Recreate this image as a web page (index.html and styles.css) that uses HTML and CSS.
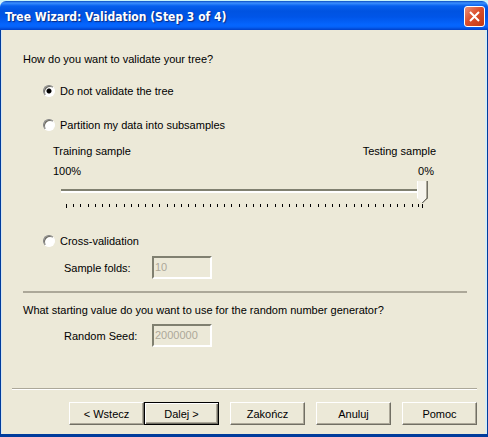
FILE: index.html
```html
<!DOCTYPE html>
<html lang="en">
<head>
    <meta charset="UTF-8">
    <meta name="viewport" content="width=device-width, initial-scale=1.0">
    <title>Tree Wizard: Validation</title>
    <link rel="stylesheet" href="styles.css">
</head>
<body>
    <form class="dialog">
        <header class="titlebar">
            <h1>Tree Wizard: Validation (Step 3 of 4)</h1>
            <button type="button" class="close" aria-label="Close">
                <svg width="13" height="13" viewBox="0 0 13 13">
                    <path d="M2 2l9 9M11 2l-9 9" stroke="#fff" stroke-width="2" fill="none"/>
                </svg>
            </button>
        </header>

        <main class="content">
            <p>How do you want to validate your tree?</p>

            <div class="option">
                <input type="radio" name="validation" id="none" checked>
                <label for="none">Do not validate the tree</label>
            </div>

            <div class="option">
                <input type="radio" name="validation" id="partition">
                <label for="partition">Partition my data into subsamples</label>
            </div>

            <div class="samples">
                <div class="sample-row">
                    <label for="split">Training sample</label>
                    <span>Testing sample</span>
                </div>
                <div class="sample-row percents">
                    <output>100%</output>
                    <output>0%</output>
                </div>
                <div class="slider">
                    <input type="range" id="split" min="0" max="100" value="100">
                    <svg class="ticks" viewBox="0 0 357 4" preserveAspectRatio="none">
                        <path d="M0 0h1v4h-1zM7 0h1v3h-1zM14 0h1v3h-1zM22 0h1v3h-1zM29 0h1v3h-1zM36 0h1v3h-1zM43 0h1v3h-1zM50 0h1v3h-1zM58 0h1v3h-1zM65 0h1v3h-1zM72 0h1v3h-1zM79 0h1v3h-1zM86 0h1v3h-1zM93 0h1v3h-1zM101 0h1v3h-1zM108 0h1v3h-1zM115 0h1v3h-1zM122 0h1v3h-1zM129 0h1v3h-1zM137 0h1v3h-1zM144 0h1v3h-1zM151 0h1v3h-1zM158 0h1v3h-1zM165 0h1v3h-1zM173 0h1v3h-1zM180 0h1v3h-1zM187 0h1v3h-1zM194 0h1v3h-1zM201 0h1v3h-1zM209 0h1v3h-1zM216 0h1v3h-1zM223 0h1v3h-1zM230 0h1v3h-1zM237 0h1v3h-1zM244 0h1v3h-1zM252 0h1v3h-1zM259 0h1v3h-1zM266 0h1v3h-1zM273 0h1v3h-1zM280 0h1v3h-1zM288 0h1v3h-1zM295 0h1v3h-1zM302 0h1v3h-1zM309 0h1v3h-1zM317 0h1v3h-1zM324 0h1v3h-1zM331 0h1v3h-1zM338 0h1v3h-1zM346 0h1v3h-1zM352 0h1v3h-1zM356 0h1v4h-1z"/>
                    </svg>
                </div>
            </div>

            <div class="option">
                <input type="radio" name="validation" id="cross">
                <label for="cross">Cross-validation</label>
            </div>

            <div class="field">
                <label for="folds">Sample folds:</label>
                <input type="text" id="folds" value="10" disabled>
            </div>

            <hr>

            <p>What starting value do you want to use for the random number generator?</p>

            <div class="field">
                <label for="seed">Random Seed:</label>
                <input type="text" id="seed" value="2000000" disabled>
            </div>
        </main>

        <footer class="buttons">
            <div class="steps">
                <button type="button">&lt; Wstecz</button>
                <button type="submit" class="default">Dalej &gt;</button>
            </div>
            <button type="button">Zakończ</button>
            <button type="button">Anuluj</button>
            <button type="button">Pomoc</button>
        </footer>
    </form>
</body>
</html>
```
FILE: styles.css
```css
* {
    box-sizing: border-box;
}

body {
    margin: 0;
    background-color: #d4f4fc;
    color: #000;
    font: 11px/16px "Liberation Sans", Arial, sans-serif;
}

p, h1 {
    margin: 0;
}

input, button {
    margin: 0;
    font: inherit;
    color: inherit;
}

.dialog {
    display: flex;
    flex-direction: column;
    min-height: 100vh;
    border-top: 1px solid #c8f4f8;
}

/* Title bar */
.titlebar {
    display: flex;
    align-items: center;
    justify-content: space-between;
    height: 29px;
    padding: 2px 3px 0 5px;
    border-radius: 6px 6px 0 0;
    background: linear-gradient(#0a4cc0 0, #3a90ff 2px, #0560ee 5px, #0053e1 10px, #0055e8 16px, #0566ff 24px, #0562f8 26px, #0040c8 29px);
}

.titlebar h1 {
    color: #fff;
    font: bold 12px/18px "DejaVu Sans Condensed", "Open Sans", sans-serif;
    text-shadow: 1px 1px 1px #0a2a80;
}

.close {
    display: flex;
    align-items: center;
    justify-content: center;
    width: 21px;
    height: 21px;
    padding: 0;
    border: 1px solid #fff;
    border-radius: 3px;
    background: linear-gradient(135deg, #e8917a, #dc4f2c 45%, #c03a14);
}

/* Dialog body */
.content {
    flex: 1;
    padding: 21px 20px 0 22px;
    border: solid #003c9c;
    border-width: 0 1px;
    box-shadow: inset 1px 0 #d6e6f4, inset -2px 0 #d6ecf4;
    background-color: #ece9d8;
}

.option {
    display: flex;
    align-items: center;
    gap: 5px;
    margin: 16px 0 18px 20px;
}

.option input {
    appearance: none;
    width: 12px;
    height: 12px;
    border: 1px solid;
    border-color: #808080 #fff #fff #808080;
    border-radius: 50%;
    background-color: #fff;
    box-shadow: inset 1px 1px #6c6a60;
}

.option input:checked {
    background-image: radial-gradient(circle, #000 2px, transparent 3px);
}

.samples {
    margin: -8px 31px 0 30px;
}

.sample-row {
    display: flex;
    justify-content: space-between;
}

.percents {
    padding: 4px 2px 0 0;
}

.slider {
    margin: 2px 8px 0 8px;
}

.slider input {
    display: block;
    appearance: none;
    width: 100%;
    height: 22px;
    background: linear-gradient(#808070 0 2px, #fff 2px 4px) 0 8px / 100% 4px no-repeat;
}

.slider input::-webkit-slider-thumb {
    appearance: none;
    width: 11px;
    height: 22px;
    background:
        linear-gradient(135deg, transparent 4px, #716f64 4px) 5px 16px / 6px 6px no-repeat,
        linear-gradient(90deg, #fff 1px, #f6f4ec 1px 9px, #aca899 9px 10px, #716f64 10px);
    clip-path: polygon(0 0, 100% 0, 100% 17px, 6px 100%, 5px 100%, 0 17px);
}

.ticks {
    display: block;
    width: calc(100% - 10px);
    height: 4px;
    margin: 1px 5px 0 5px;
    shape-rendering: crispEdges;
}

.samples + .option {
    margin: 25px 0 7px 20px;
}

.field {
    display: flex;
    align-items: center;
    margin-left: 41px;
}

.field label {
    width: 88px;
}

.field input {
    width: 60px;
    height: 23px;
    padding: 0 1px 2px 1px;
    border: 2px solid;
    border-color: #808070 #fff #fff #808070;
    background-color: #ece9d8;
    color: #aca899;
}

hr {
    height: 2px;
    margin: 12px 0 9px 0;
    border: 0;
    background-color: #aca899;
}

hr + p {
    margin-bottom: 6px;
}

/* Wizard buttons */
.buttons {
    display: flex;
    justify-content: flex-end;
    gap: 11px;
    padding: 14px 10px 9px 11px;
    border: solid #003c9c;
    border-width: 0 1px 3px 1px;
    box-shadow: inset 1px 0 #d6e6f4, inset -2px 0 #d6ecf4;
    background: linear-gradient(#aca899 0 1px, #fff 1px 2px) 11px 0 / calc(100% - 21px) 2px no-repeat #ece9d8;
}

.steps {
    display: flex;
}

.buttons button {
    width: 75px;
    height: 23px;
    padding: 0;
    border: 1px solid;
    border-color: #fff #716f64 #716f64 #fff;
    box-shadow: inset -1px -1px #aca899;
    background-color: #ece9d8;
}

.buttons .default {
    border-color: #000;
    box-shadow: inset 1px 1px #fff, inset -1px -1px #716f64, inset -2px -2px #aca899;
}
```
